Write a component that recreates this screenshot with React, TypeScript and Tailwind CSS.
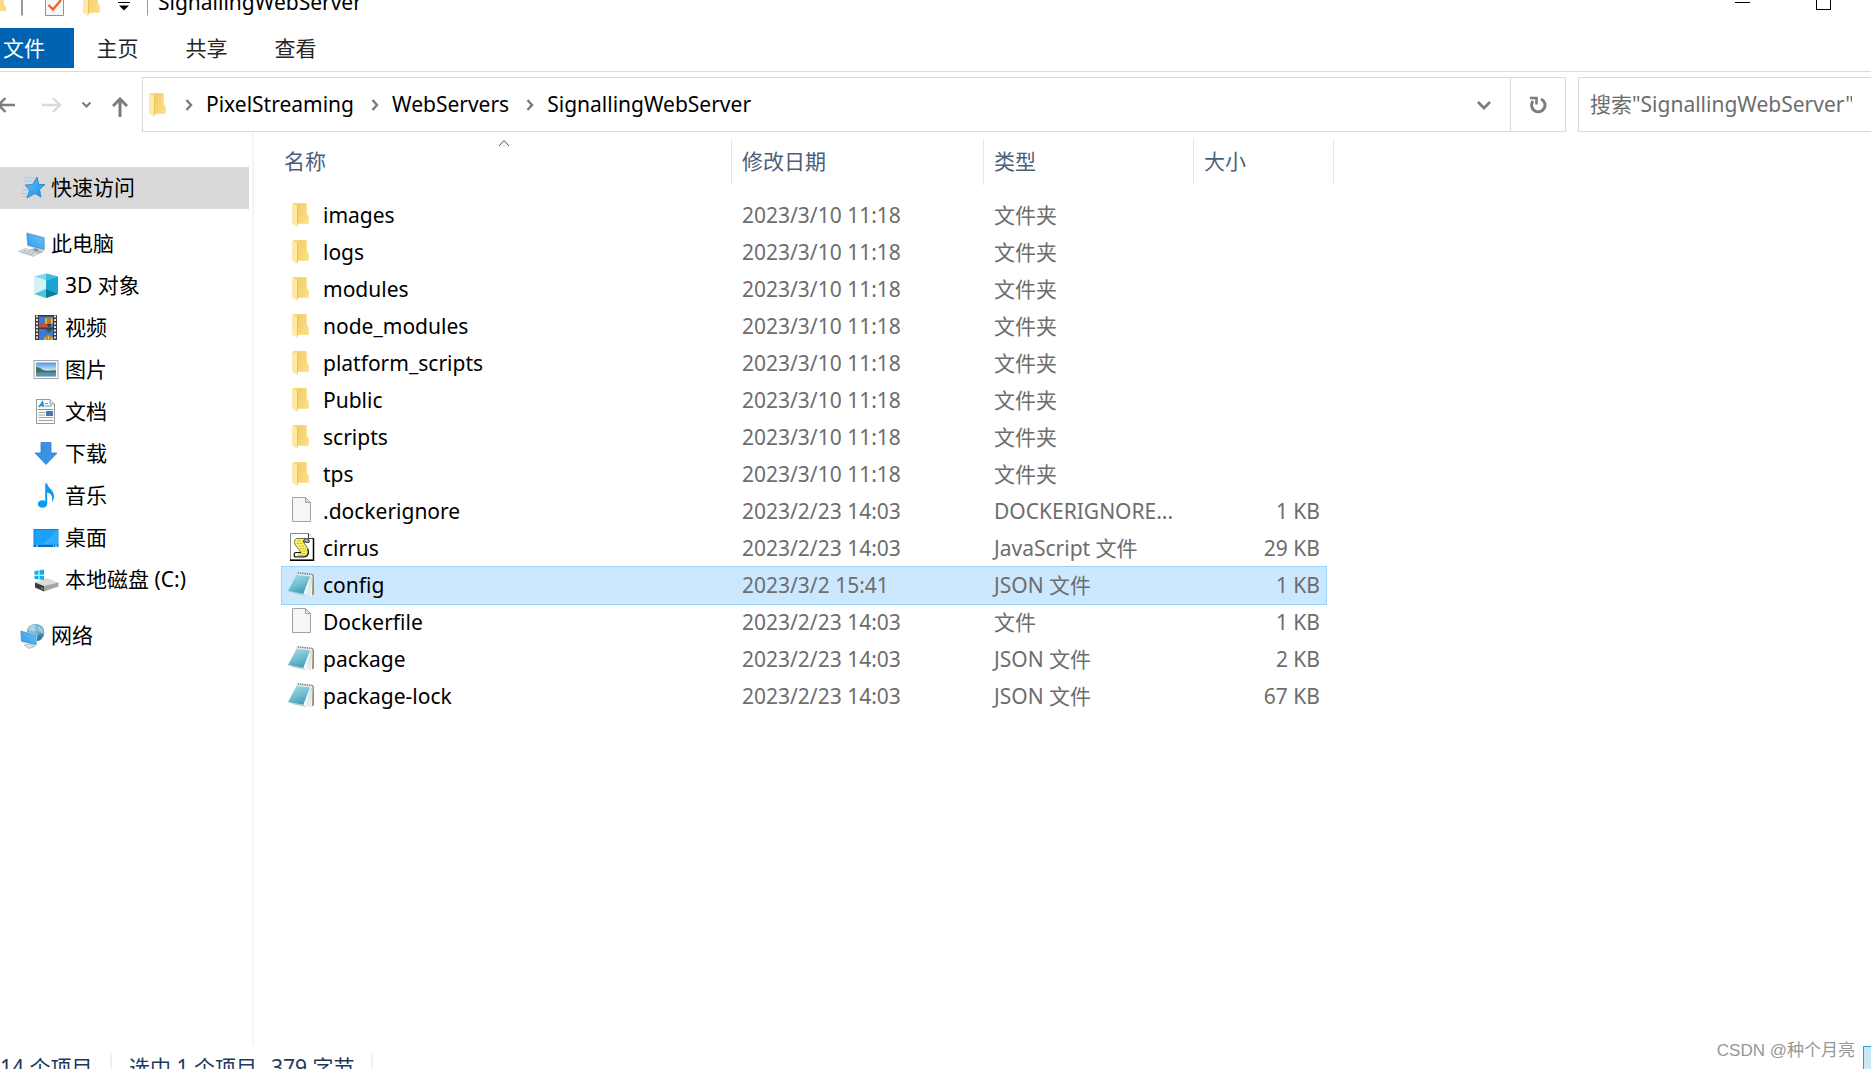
import React from "react";

type IconProps = { className?: string };

function FolderShape() {
  return (
    <>
      <path d="M1 0H14.5V11L16.5 13.500V20.500H6Z" fill="#f8d775" />
      <path d="M6 1H14.5V11L16.500 13.500V20.500H6Z" fill="url(#folderFront)" />
      <path d="M0 0.5L5 3V24L0 20.5Z" fill="#ffe9a6" />
      <path d="M5 3L6 2.500V21L5 24Z" fill="#e9c35f" />
    </>
  );
}

function FolderIcon({ className }: IconProps) {
  return (
    <svg className={className} width="17" height="24" viewBox="0 0 17 24" aria-hidden="true">
      <FolderShape />
    </svg>
  );
}

function RowFolderIcon() {
  return (
    <svg width="28" height="31" viewBox="0 0 28 31" aria-hidden="true">
      <g transform="translate(5 3)">
        <FolderShape />
      </g>
    </svg>
  );
}

function BlankFileIcon() {
  return (
    <svg width="28" height="31" viewBox="0 0 28 31" aria-hidden="true">
      <path d="M5.5 1.500H18.500L23.500 6.500V25.500H5.500Z" fill="#f6f6f6" stroke="#a3a3a3" />
      <path d="M18.500 1.500V6.500H23.500Z" fill="#e2e2e2" stroke="#a3a3a3" />
    </svg>
  );
}

function ScriptFileIcon() {
  return (
    <svg width="28" height="31" viewBox="0 0 28 31" aria-hidden="true">
      <path d="M3.500 0.500H21.500L26.500 5.500V27H3.500Z" fill="#fff" stroke="#8a8a8a" />
      <path d="M3 27.200H26.500V5" fill="none" stroke="#000" strokeWidth="1.500" />
      <path d="M21.500 0.500V5.500H26.500" fill="#fff" stroke="#333" />
      <path
        d="M9.500 5.500H19C17 7 16.500 9 17.500 11L20.500 15C23 19 20.500 22 17.500 23H9.500L12 20C13.500 19 13 17.500 12 16.500L9 13C7 10 7 7 9.500 5.500Z"
        fill="#fbf46c"
        stroke="#55501c"
        strokeWidth="0.800"
      />
      <path d="M10 8H15.500M9.500 10.500H15.500M11 13H17M13 15.500H19M14 18H20M13 20.500H19" stroke="#d0bd2c" strokeWidth="0.900" />
      <path d="M16.500 9C16.500 6.500 18 5.500 19.500 5.500C22 5.500 22.800 7.500 22 9.500Z" fill="#a3a3a3" stroke="#222" strokeWidth="0.900" />
      <path d="M14 19.500H9C6.500 19.500 6.500 24 9 24H17.500C21.500 23.500 22.500 19 20.500 16" fill="none" stroke="#111" strokeWidth="1.200" />
      <path d="M8.500 20.500H12.500L11 23H8.500C7.500 22.500 7.500 21 8.500 20.500Z" fill="#fbf8b4" />
    </svg>
  );
}

function NotepadIcon() {
  return (
    <svg width="28" height="31" viewBox="0 0 28 31" aria-hidden="true">
      <path d="M25 3.500L27 5.500V24L24.500 26Z" fill="#a58a62" />
      <path d="M1 21L16 23.500L20 26L8 23.800Z" fill="#b9cbd3" />
      <path d="M10.500 3L24 4.500L16.500 23.800L1 21Z" fill="url(#padFront)" />
      <path d="M24 4.500L25.500 6L25 26.500L16.500 23.800Z" fill="#f4f8fa" />
      <path d="M24 7L20.500 25M24.500 7L23 25.800" stroke="#c3d0d7" strokeWidth="0.700" />
      <path d="M10.500 3L25 4.500L24 6.500L9.300 5Z" fill="#dfe8ea" />
      <path d="M10.500 2.800L25 4.300" stroke="#7a8488" strokeWidth="1.500" strokeDasharray="1.400 0.900" />
    </svg>
  );
}

function QuickAccessIcon() {
  return (
    <svg width="28" height="28" viewBox="0 0 28 28" aria-hidden="true">
      <path d="M7 4H16M6 7H14M4 16H10M3 19.500H9M5 22.500H9" stroke="#9ccbee" />
      <path
        d="M19 3L20.800 10.500H27L21.500 15.500L23 23L17 19.500L9 24L11.500 16L7 11L14.500 10.500Z"
        fill="url(#starFill)"
        stroke="#2581ca"
        strokeWidth="0.800"
      />
    </svg>
  );
}

function ComputerIcon() {
  return (
    <svg width="28" height="28" viewBox="0 0 28 28" aria-hidden="true">
      <path d="M12 19L20 18L26 22L19 24.500Z" fill="#b6bbc0" />
      <path d="M16 17L20 18V22H16Z" fill="#8b9299" />
      <path d="M8 2L27 7V21L9 16Z" fill="#d5dade" />
      <path d="M9 3.500L26 8V19.500L10 15.200Z" fill="url(#screenFill)" stroke="#2680c8" strokeWidth="0.600" />
      <path d="M0.500 21.500L7 18.500L21 22.500L15.500 26.500Z" fill="#e2e5e8" stroke="#a6abb0" strokeWidth="0.600" />
      <path d="M3.500 21.600L16 25M6 20.300L18.500 23.500M8 19.500L5 22.500M12 20.500L9 23.500M16 21.500L13 24.500" stroke="#a6abb0" strokeWidth="0.700" />
    </svg>
  );
}

function NetworkIcon() {
  return (
    <svg width="28" height="28" viewBox="0 0 28 28" aria-hidden="true">
      <circle cx="17.500" cy="10.500" r="8.800" fill="url(#globeFill)" />
      <path d="M12 5C14 3 16 2 18 3L16 6L18 8L14 9L10 9ZM20 3.500L25 7L26 12L22 10L20 7Z" fill="#c6e2ee" opacity="0.600" />
      <path d="M20 13L25 12L23 18L19 19Z" fill="#2c6f98" opacity="0.600" />
      <path d="M6 23L12 22L17 24.500L11 26.500Z" fill="#d9dee2" stroke="#9ba4aa" strokeWidth="0.600" />
      <path d="M2 8L19 13V24L3 20Z" fill="#d6e0e6" />
      <path d="M3 9.300L18 13.700V22.700L3.500 19Z" fill="url(#screenFill)" stroke="#2680c8" strokeWidth="0.600" />
    </svg>
  );
}

function ObjectsIcon() {
  return (
    <svg width="26" height="28" viewBox="0 0 26 28" aria-hidden="true">
      <path d="M1 4.500L13 1.500L25 4.500L13 8.500Z" fill="#7ddbe8" />
      <path d="M13 1.500L25 4.500L13 8.500Z" fill="#3cbdd5" />
      <path d="M1 4.500L13 8.500V18L1 22Z" fill="#d5f3f4" />
      <path d="M25 4.500L13 8.500V18L25 22Z" fill="#15a6d6" />
      <path d="M1 22L13 17L25 22L13 26Z" fill="#4bc5d6" />
      <path d="M13 17L25 22L13 26Z" fill="#087b9f" />
    </svg>
  );
}

function VideoIcon() {
  return (
    <svg width="26" height="28" viewBox="0 0 26 28" aria-hidden="true">
      <rect x="2" y="1" width="22" height="25" fill="#3b3b3b" />
      <rect x="6" y="2.500" width="14" height="11" fill="#3d79d5" />
      <rect x="6" y="15" width="14" height="11" fill="#3d79d5" />
      <path d="M4 1.500V26M22 1.500V26" stroke="#e3e3e3" strokeWidth="2" strokeDasharray="2 1.500" />
      <path d="M6 10C9 7 11 10 14 10V13H6Z" fill="#ce4b40" />
      <circle cx="16" cy="7" r="4" fill="#efb82a" />
      <path d="M15 3V11M17 3V11" stroke="#8e3a24" />
      <path d="M13.500 10H18.500L16 13.500Z" fill="#443322" />
      <path d="M12 15H20L16 19Z" fill="#3a5a35" />
      <path d="M11 26C11 20 20 20 20 26Z" fill="#efb82a" />
      <path d="M14 22V26M17 22V26" stroke="#a54a20" />
    </svg>
  );
}

function PictureIcon() {
  return (
    <svg width="26" height="28" viewBox="0 0 26 28" aria-hidden="true">
      <rect x="1" y="4.500" width="24" height="18" fill="#fff" stroke="#a5a5a5" />
      <rect x="3" y="6.500" width="20" height="14" fill="url(#skyFill)" />
      <path d="M3 11C7 11 9 14 12 14.500C16 15 19 14 23 14.500V17H3Z" fill="#3f7260" />
      <path d="M3 16.500H23V20.500H3Z" fill="#5a93b5" />
    </svg>
  );
}

function DocumentIcon() {
  return (
    <svg width="26" height="28" viewBox="0 0 26 28" aria-hidden="true">
      <path d="M3.500 1.500H17L21.500 6V25.500H3.500Z" fill="#fbfbfb" stroke="#999" />
      <path d="M17 1.500V6H21.500" fill="#e8e8e8" stroke="#999" />
      <path d="M6 9L9.500 4L10.500 9M7.500 7.500H10" fill="none" stroke="#268bd4" strokeWidth="1.500" />
      <path d="M12 5.500H15M12 8H19M5 11.500H20" stroke="#4aa0dc" />
      <path d="M5.500 14.500H12M5.500 17H12M5.500 19.500H20M5.500 22.500H20" stroke="#9ba3a9" />
      <rect x="13" y="13" width="7" height="5" fill="#4679a8" />
    </svg>
  );
}

function DownloadIcon() {
  return (
    <svg width="26" height="28" viewBox="0 0 26 28" aria-hidden="true">
      <path d="M8 2.500H18V13H24L13 24.500L2 13H8Z" fill="#3992e4" stroke="#2b82d3" strokeWidth="0.800" />
    </svg>
  );
}

function MusicIcon() {
  return (
    <svg width="26" height="28" viewBox="0 0 26 28" aria-hidden="true">
      <ellipse cx="9.500" cy="22" rx="4.700" ry="3.800" fill="#0a9bf5" />
      <path d="M12.200 1.500H14.200C14.500 6 21.500 8 21 15C20.900 17 20 19 19 20C20 14 18 11.500 14.200 10.500V22H12.200Z" fill="#0a9bf5" />
    </svg>
  );
}

function DesktopIcon() {
  return (
    <svg width="26" height="28" viewBox="0 0 26 28" aria-hidden="true">
      <rect x="1" y="5.500" width="24" height="17" fill="#1ba0fb" stroke="#1484d6" />
      <path d="M25 5.500V20L10 20Z" fill="#3eb0fd" opacity="0.700" />
      <path d="M1 22H25" stroke="#0b5e9f" strokeWidth="1.500" />
      <path d="M3 22H5M20 22H21M22 22H24" stroke="#fff" />
    </svg>
  );
}

function DriveIcon() {
  return (
    <svg width="26" height="28" viewBox="0 0 26 28" aria-hidden="true">
      <path d="M2 16.500L14 12L25.500 16.500L11 20.500Z" fill="#dcdcdc" />
      <path d="M2 16.500L11 20V25.500L2 21.500Z" fill="#3c403d" />
      <path d="M11 20L25.500 16.500V20.500L11 25.500Z" fill="#a5a5a5" />
      <path d="M8 22L10 23" stroke="#5fd864" />
      <path d="M1.500 5L5.500 4.500V8.700H1.500ZM6.500 4.300L11 3.500V8.700H6.500ZM1.500 9.700H5.500V13.500L1.500 13ZM6.500 9.700H11V14L6.500 13.600Z" fill="#07b3ee" />
    </svg>
  );
}

function CrumbChevron() {
  return (
    <svg className="mt-[2px] shrink-0" width="8" height="12" viewBox="0 0 8 12" aria-hidden="true">
      <path d="M1.500 1L6 6L1.500 11" fill="none" stroke="#7a7a7a" strokeWidth="2.400" />
    </svg>
  );
}

const TOP_LEVEL = "flex h-[42px] items-center gap-[5px] pl-[18px] text-black";
const CHILD_LEVEL = "flex h-[42px] items-center gap-[6px] pl-[33px] text-black";

const places = [
  { label: "3D 对象", Icon: ObjectsIcon },
  { label: "视频", Icon: VideoIcon },
  { label: "图片", Icon: PictureIcon },
  { label: "文档", Icon: DocumentIcon },
  { label: "下载", Icon: DownloadIcon },
  { label: "音乐", Icon: MusicIcon },
  { label: "桌面", Icon: DesktopIcon },
  { label: "本地磁盘 (C:)", Icon: DriveIcon },
];

type Entry = {
  name: string;
  date: string;
  type: string;
  size?: string;
  Icon: () => React.JSX.Element;
  selected?: boolean;
};

const folder = (name: string): Entry => ({
  name,
  date: "2023/3/10 11:18",
  type: "文件夹",
  Icon: RowFolderIcon,
});

const entries: Entry[] = [
  folder("images"),
  folder("logs"),
  folder("modules"),
  folder("node_modules"),
  folder("platform_scripts"),
  folder("Public"),
  folder("scripts"),
  folder("tps"),
  { name: ".dockerignore", date: "2023/2/23 14:03", type: "DOCKERIGNORE...", size: "1 KB", Icon: BlankFileIcon },
  { name: "cirrus", date: "2023/2/23 14:03", type: "JavaScript 文件", size: "29 KB", Icon: ScriptFileIcon },
  { name: "config", date: "2023/3/2 15:41", type: "JSON 文件", size: "1 KB", Icon: NotepadIcon, selected: true },
  { name: "Dockerfile", date: "2023/2/23 14:03", type: "文件", size: "1 KB", Icon: BlankFileIcon },
  { name: "package", date: "2023/2/23 14:03", type: "JSON 文件", size: "2 KB", Icon: NotepadIcon },
  { name: "package-lock", date: "2023/2/23 14:03", type: "JSON 文件", size: "67 KB", Icon: NotepadIcon },
];

function SharedGradients() {
  return (
    <svg className="absolute h-0 w-0" aria-hidden="true">
      <defs>
        <linearGradient id="folderFront" x1="0" y1="0" x2="1" y2="0.600">
          <stop offset="0" stopColor="#f1cd6b" />
          <stop offset="1" stopColor="#fcdd82" />
        </linearGradient>
        <linearGradient id="padFront" x1="0.300" y1="0" x2="0.700" y2="1">
          <stop offset="0" stopColor="#a9dbe6" />
          <stop offset="0.550" stopColor="#6fbdd0" />
          <stop offset="1" stopColor="#3d97b4" />
        </linearGradient>
        <linearGradient id="starFill" x1="0" y1="0" x2="1" y2="1">
          <stop offset="0" stopColor="#5cc0fb" />
          <stop offset="1" stopColor="#1c8ee6" />
        </linearGradient>
        <linearGradient id="screenFill" x1="0" y1="1" x2="1" y2="0">
          <stop offset="0" stopColor="#2f9bec" />
          <stop offset="1" stopColor="#6cc3fb" />
        </linearGradient>
        <radialGradient id="globeFill" cx="0.400" cy="0.300" r="0.800">
          <stop offset="0" stopColor="#9cd0e4" />
          <stop offset="1" stopColor="#2f7ba8" />
        </radialGradient>
        <linearGradient id="skyFill" x1="0" y1="0" x2="0" y2="1">
          <stop offset="0" stopColor="#4f97e3" />
          <stop offset="0.600" stopColor="#d8ebf8" />
        </linearGradient>
      </defs>
    </svg>
  );
}

function TitleBar() {
  return (
    <header className="flex h-7 shrink-0 items-start overflow-hidden">
      <svg width="148" height="18" viewBox="0 0 148 18" aria-hidden="true">
        <path d="M0 0H4V5L6 7V11H0Z" fill="#fadb82" />
        <path d="M22 0V15.500M148 0V15.500" stroke="#9a9a9a" strokeWidth="2" />
        <path d="M45.500 -2V15.500H63.500V-2" fill="#f7f8f9" stroke="#8f9496" />
        <path d="M48.500 5L53 9.500L61 0" fill="none" stroke="#f26322" strokeWidth="2.400" />
        <g transform="translate(83 -8)">
          <FolderShape />
        </g>
        <path d="M118 2.500H130" stroke="#000" />
        <path d="M119 5.500H129L124 10.500Z" fill="#000" />
      </svg>
      <h1 className="-mt-3 ml-[10px] flex-1 leading-7 text-black">SignallingWebServer</h1>
      <button type="button" aria-label="最小化" className="mr-[66px] h-3 w-[15px]">
        <span className="mb-2 block h-px bg-black" />
      </button>
      <button type="button" aria-label="最大化" className="mr-10 h-[10px] w-[15px] border border-t-0 border-black" />
    </header>
  );
}

function RibbonTabs() {
  return (
    <nav className="flex h-11 shrink-0 border-b border-[#dadbdc] text-[#262626]">
      <button type="button" className="h-10 w-[74px] bg-[#0063b1] pl-[3px] text-left text-white">
        文件
      </button>
      {["主页", "共享", "查看"].map((tab) => (
        <button key={tab} type="button" className="h-10 w-[89px] pr-[2px]">
          {tab}
        </button>
      ))}
    </nav>
  );
}

function AddressRow() {
  return (
    <div className="flex h-[60px] shrink-0 items-center pt-[5px]">
      <button type="button" aria-label="后退">
        <svg width="15" height="16" viewBox="0 0 15 16" aria-hidden="true">
          <path d="M15 8H-2M5.500 1L-1.500 8L5.500 15" fill="none" stroke="#7d7d7d" strokeWidth="2.400" />
        </svg>
      </button>
      <button type="button" aria-label="前进" className="ml-[27px]">
        <svg width="20" height="16" viewBox="0 0 20 16" aria-hidden="true">
          <path d="M0 8H18M11 1L18 8L11 15" fill="none" stroke="#dadada" strokeWidth="2.400" />
        </svg>
      </button>
      <button type="button" aria-label="最近浏览的位置" className="ml-5">
        <svg width="9" height="8" viewBox="0 0 9 8" aria-hidden="true">
          <path d="M0.500 1.500L4.500 5.500L8.500 1.500" fill="none" stroke="#7d7d7d" strokeWidth="2.200" />
        </svg>
      </button>
      <button type="button" aria-label="上移" className="mr-[14px] ml-[21px] pt-1">
        <svg width="16" height="20" viewBox="0 0 16 20" aria-hidden="true">
          <path d="M8 20V2M1 9L8 2L15 9" fill="none" stroke="#7d7d7d" strokeWidth="3" />
        </svg>
      </button>
      <div className="flex h-[55px] min-w-0 flex-1 items-center border border-[#d9d9d9] text-black">
        <FolderIcon className="ml-[6px] shrink-0" />
        <ol className="ml-[19px] flex flex-1 items-center pb-[2px]">
          {["PixelStreaming", "WebServers", "SignallingWebServer"].map((crumb) => (
            <li key={crumb} className="flex items-center">
              <CrumbChevron />
              <a href="#" className="mr-[17px] ml-[13px]">
                {crumb}
              </a>
            </li>
          ))}
        </ol>
        <button type="button" aria-label="以前的位置" className="flex h-full w-[52px] items-center justify-center">
          <svg width="14" height="10" viewBox="0 0 14 10" aria-hidden="true">
            <path d="M1 2L7 8L13 2" fill="none" stroke="#7d7d7d" strokeWidth="2.800" />
          </svg>
        </button>
        <button
          type="button"
          aria-label="刷新"
          className="flex h-full w-[55px] items-center justify-center border-l border-[#d9d9d9]"
        >
          <svg width="18" height="18" viewBox="0 0 18 18" aria-hidden="true">
            <path d="M12 3A6.700 6.700 0 1 1 4 5" fill="none" stroke="#7d7d7d" strokeWidth="3" />
            <path d="M1 2H7.500V8.500" fill="none" stroke="#7d7d7d" strokeWidth="2.600" />
          </svg>
        </button>
      </div>
      <input
        type="search"
        aria-label="搜索"
        placeholder={'搜索"SignallingWebServer"'}
        className="ml-3 h-[55px] w-[293px] border border-r-0 border-[#d9d9d9] pb-[2px] pl-[11px] text-[#6d6d6d] placeholder:text-[#6d6d6d]"
      />
    </div>
  );
}

function Sidebar() {
  return (
    <aside className="w-[254px] shrink-0 border-r-2 border-[#f5f5f5] pt-[35px] pr-[3px]">
      <a href="#" className={`${TOP_LEVEL} bg-[#d9d9d9]`}>
        <QuickAccessIcon />
        <span className="pb-[2px]">快速访问</span>
      </a>
      <a href="#" className={`${TOP_LEVEL} mt-[14px]`}>
        <ComputerIcon />
        <span className="pb-[2px]">此电脑</span>
      </a>
      {places.map(({ label, Icon }) => (
        <a key={label} href="#" className={CHILD_LEVEL}>
          <Icon />
          <span className="pb-[2px]">{label}</span>
        </a>
      ))}
      <a href="#" className={`${TOP_LEVEL} mt-[14px]`}>
        <NetworkIcon />
        <span className="pb-[2px]">网络</span>
      </a>
    </aside>
  );
}

function FileTable() {
  return (
    <main className="min-w-0 flex-1 pt-[7px] pl-[27px]">
      <table className="w-[1053px] table-fixed border-collapse text-left">
        <colgroup>
          <col className="w-[451px]" />
          <col className="w-[252px]" />
          <col className="w-[210px]" />
          <col className="w-[140px]" />
        </colgroup>
        <thead>
          <tr className="text-[#4c607a]">
            {["名称", "修改日期", "类型", "大小"].map((heading, index) => (
              <th key={heading} scope="col" className="h-[58px] p-0 align-top font-normal">
                <div
                  className={`relative flex h-[46px] items-center border-r border-[#e5e5e5] pb-[2px] ${index === 0 ? "pl-[3px]" : "pl-[10px]"}`}
                >
                  {heading}
                  {index === 0 && (
                    <svg className="absolute top-0 left-[217px]" width="12" height="8" viewBox="0 0 12 8" aria-hidden="true">
                      <path d="M1 7L6 1.500L11 7" fill="none" stroke="#555" />
                    </svg>
                  )}
                </div>
              </th>
            ))}
          </tr>
        </thead>
        <tbody>
          {entries.map(({ name, date, type, size, Icon, selected }) => (
            <tr key={name} aria-selected={selected} className="relative isolate text-[#6d6d6d]">
              <td className="h-[37px] p-0 text-black">
                {selected && (
                  <span className="absolute -inset-y-px right-[7px] left-0 -z-10 border border-[#99d1ff] bg-[#cce8ff]" />
                )}
                <div className="flex items-center gap-2 pl-[6px]">
                  <Icon />
                  <span className="pb-[2px]">{name}</span>
                </div>
              </td>
              <td className="p-0 pb-[2px] pl-[10px]">{date}</td>
              <td className="p-0 pb-[2px] pl-[10px]">{type}</td>
              <td className="p-0 pr-[14px] pb-[2px] text-right">{size}</td>
            </tr>
          ))}
        </tbody>
      </table>
    </main>
  );
}

function StatusBar() {
  return (
    <footer className="relative flex h-[23px] shrink-0 items-start overflow-hidden pt-[7px] text-[#1e395b]">
      <span className="w-[112px] border-r-2 border-[#f0f0f0] leading-7">14 个项目</span>
      <span className="ml-[17px] leading-7">选中 1 个项目</span>
      <span className="ml-[14px] border-r-2 border-[#f0f0f0] pr-[17px] leading-7">379 字节</span>
    </footer>
  );
}

export default function App() {
  return (
    <div className="relative flex h-screen flex-col overflow-hidden bg-white font-['Noto_Sans','Noto_Sans_CJK_SC',sans-serif] text-[21px] leading-7">
      <SharedGradients />
      <TitleBar />
      <RibbonTabs />
      <AddressRow />
      <div className="flex min-h-0 flex-1">
        <Sidebar />
        <FileTable />
      </div>
      <StatusBar />
      <div className="absolute right-0 bottom-0 flex items-end">
        <p className="mr-2 mb-1 font-['Liberation_Sans','Noto_Sans_CJK_SC',sans-serif] text-[17px] leading-7 text-[#979797]">
          CSDN @种个月亮
        </p>
        <span className="h-[23px] w-2 border-t border-l border-[#26a0da] bg-[#cbe8f6]" />
      </div>
    </div>
  );
}
